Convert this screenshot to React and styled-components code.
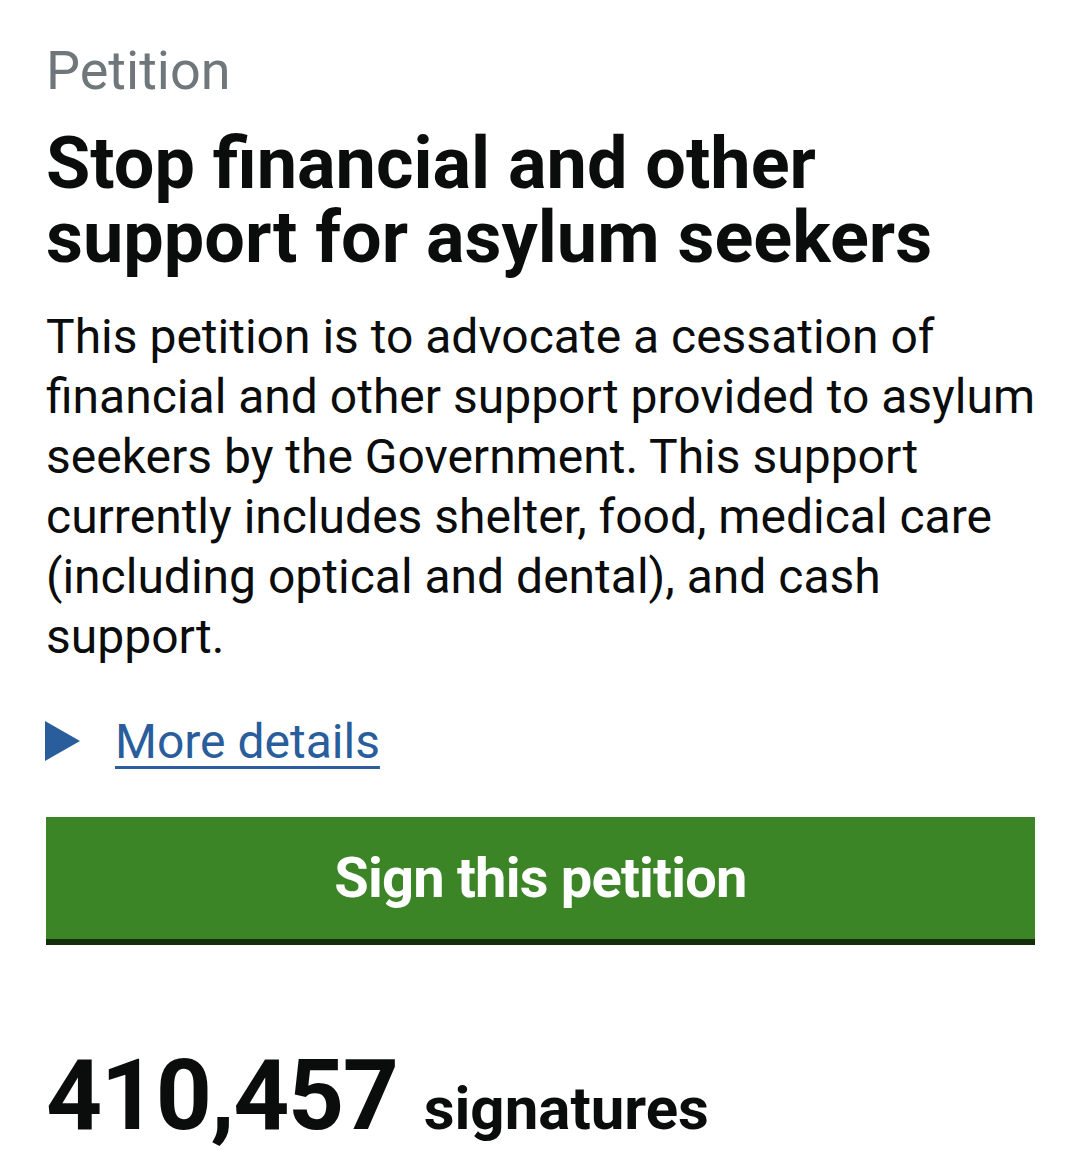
import React from "react";
import styled, { createGlobalStyle } from "styled-components";

const Global = createGlobalStyle`
  html, body {
    margin: 0;
    padding: 0;
    background: #ffffff;
  }
  body {
    font-family: Roboto, "Noto Sans", "Liberation Sans", sans-serif;
    color: #0b0c0c;
  }
`;

const Page = styled.main`
  display: flex;
  flex-direction: column;
  padding: 41px 45px 0 46px;
`;

const Caption = styled.span`
  font-size: 54px;
  line-height: 60px;
  font-weight: 400;
  color: #6f777b;
`;

const Title = styled.h1`
  margin: 26px 0 0;
  font-size: 72px;
  line-height: 74px;
  font-weight: 700;
`;

const Summary = styled.p`
  margin: 32px -24px 0 0;
  font-size: 48px;
  line-height: 60px;
  font-weight: 400;
`;

const Details = styled.div`
  display: flex;
  align-items: center;
  gap: 35px;
  margin-top: 45px;
  height: 60px;
`;

const Arrow = styled.span`
  display: block;
  width: 0;
  height: 0;
  border-top: 20px solid transparent;
  border-bottom: 20px solid transparent;
  border-left: 35px solid #295d9c;
  margin-left: -1px;
  margin-top: -3px;
`;

const DetailsLink = styled.a`
  font-size: 48px;
  line-height: 60px;
  color: #295d9c;
  text-decoration: underline;
  text-decoration-thickness: 3px;
  text-underline-offset: 8px;
  cursor: pointer;
`;

const SignButton = styled.button`
  margin-top: 45px;
  height: 128px;
  border: 0;
  border-bottom: 6px solid #142d0a;
  background: #3c8527;
  color: #ffffff;
  font-family: inherit;
  font-size: 56px;
  font-weight: 700;
  letter-spacing: -0.8px;
  cursor: pointer;
  padding: 0;
`;

const Count = styled.div`
  display: flex;
  align-items: baseline;
  gap: 26px;
  margin-top: 97px;
  line-height: 108px;
`;

const Number = styled.span`
  font-size: 98px;
  font-weight: 700;
  letter-spacing: -1.4px;
`;

const Unit = styled.span`
  font-size: 60px;
  font-weight: 700;
`;

export default function App() {
  return (
    <>
      <Global />
      <Page>
        <Caption>Petition</Caption>
        <Title>Stop financial and other support for asylum seekers</Title>
        <Summary>
          This petition is to advocate a cessation of financial and other
          support provided to asylum seekers by the Government. This support
          currently includes shelter, food, medical care (including optical and
          dental), and cash support.
        </Summary>
        <Details>
          <Arrow />
          <DetailsLink>More details</DetailsLink>
        </Details>
        <SignButton>Sign this petition</SignButton>
        <Count>
          <Number>410,457</Number>
          <Unit>signatures</Unit>
        </Count>
      </Page>
    </>
  );
}
